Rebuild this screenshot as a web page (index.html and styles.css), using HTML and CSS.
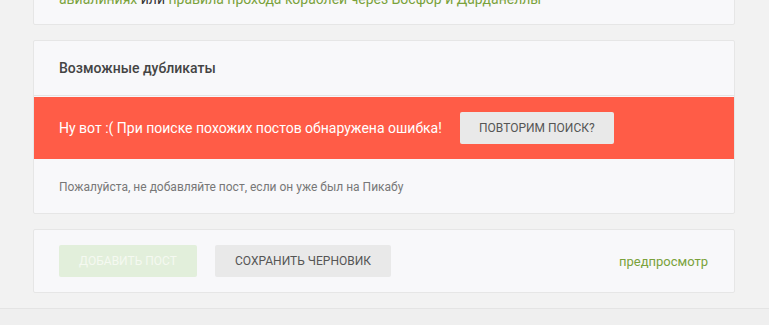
FILE: index.html
```html
<!DOCTYPE html>
<html lang="ru">
<head>
    <meta charset="UTF-8">
    <title>Добавить пост</title>
    <link rel="stylesheet" href="styles.css">
</head>
<body>
    <div class="page">
        <!-- Rules card (scrolled) -->
        <div class="card card-rules">
            <p class="rules-text">
                <a href="#" class="link">авиалиниях</a> или <a href="#" class="link">правила прохода кораблей через Босфор и Дарданеллы</a>
            </p>
        </div>

        <!-- Duplicates -->
        <div class="card">
            <div class="card-header">Возможные дубликаты</div>
            <div class="alert">
                <span class="alert-text">Ну вот :( При поиске похожих постов обнаружена ошибка!</span>
                <button class="btn btn-gray">Повторим поиск?</button>
            </div>
            <div class="card-note">Пожалуйста, не добавляйте пост, если он уже был на Пикабу</div>
        </div>

        <!-- Actions -->
        <div class="card card-actions">
            <button class="btn btn-green" disabled>Добавить пост</button>
            <button class="btn btn-gray">Сохранить черновик</button>
            <a href="#" class="link preview">предпросмотр</a>
        </div>
    </div>
    <div class="footer"></div>
</body>
</html>
```

FILE: styles.css
```css
/* Basic styles */
*, *::before, *::after {
    box-sizing: border-box;
    margin: 0;
    padding: 0;
}

body {
    font-family: Roboto, "Liberation Sans", Arial, sans-serif;
    background-color: #f2f2f2;
    color: #444;
    font-size: 14px;
    overflow: hidden;
}

.page {
    width: 702px;
    margin: -12px 0 0 33px;
    display: flex;
    flex-direction: column;
    gap: 15px;
    padding-bottom: 15px;
}

.card {
    background-color: #f8f8fa;
    border: 1px solid #e6e6e6;
    border-radius: 2px;
}

.link {
    color: #7aa23a;
    text-decoration: none;
}

.card-rules {
    padding: 0 25px 15px;
}

.rules-text {
    line-height: 20px;
    color: #333;
}

.card-header {
    padding: 17px 25px;
    line-height: 20px;
    font-weight: 500;
    color: #444;
    border-bottom: 1px solid #e4e4e4;
}

.alert {
    margin-top: 1px;
    background-color: #ff5c47;
    padding: 15px 25px;
    display: flex;
    align-items: center;
    gap: 18px;
}

.alert-text {
    color: #fff;
    line-height: 20px;
    white-space: nowrap;
}

.card-note {
    padding: 19px 25px 17px;
    font-size: 12px;
    line-height: 18px;
    color: #777;
}

.btn {
    font-family: inherit;
    height: 32px;
    padding: 0 10px;
    border: none;
    border-radius: 2px;
    font-size: 12px;
    text-transform: uppercase;
    white-space: nowrap;
    cursor: pointer;
}

.btn-gray {
    background-color: #e9e9e9;
    color: #555;
}

.alert .btn-gray {
    width: 154px;
}

.btn-green {
    background-color: #e2efdb;
    color: #f5f9f1;
    width: 138px;
    cursor: default;
}

.card-actions {
    padding: 15px 25px;
    display: flex;
    align-items: center;
    gap: 18px;
}

.card-actions .btn-gray {
    width: 176px;
}

.preview {
    margin-left: auto;
    margin-right: 1px;
    font-size: 13px;
}

.footer {
    border-top: 1px solid #e4e4e4;
    background-color: #efefef;
    height: 17px;
}
```
